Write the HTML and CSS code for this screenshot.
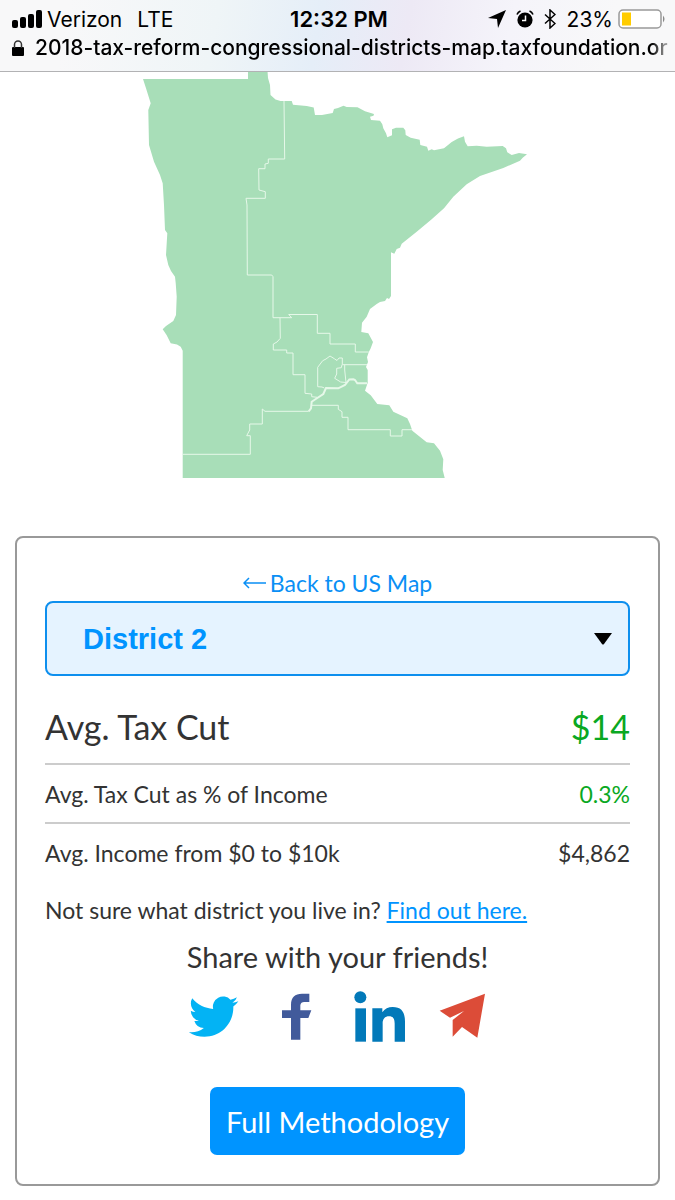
FILE: index.html
```html
<!DOCTYPE html>
<html lang="en">
<head>
  <meta charset="UTF-8">
  <meta name="viewport" content="width=device-width, initial-scale=1.0">
  <title>2018 Tax Reform by Congressional District</title>
  <link rel="stylesheet" href="styles.css">
</head>
<body>
  <header class="browser-bar">
    <div class="status-row">
      <div class="status-left">
        <svg class="signal-icon" viewBox="0 0 30 18" aria-hidden="true">
          <rect x="0" y="10" width="6" height="8" rx="2"/>
          <rect x="8" y="7" width="6" height="11" rx="2"/>
          <rect x="16" y="4" width="6" height="14" rx="2"/>
          <rect x="24" y="0" width="6" height="18" rx="2"/>
        </svg>
        <span>Verizon</span>
        <span class="network">LTE</span>
      </div>
      <div class="status-time">12:32 PM</div>
      <div class="status-right">
        <svg class="location-icon" viewBox="0 0 18 18" aria-hidden="true">
          <path d="M18 0L10 18L9 9L0 8Z"/>
        </svg>
        <svg class="alarm-icon" viewBox="0 0 18 18" aria-hidden="true">
          <circle cx="9" cy="10" r="7.6"/>
          <path d="M1 4.500Q2 2 4.500 1M17 4.500Q16 2 13.500 1" fill="none" stroke="#000" stroke-width="1.600"/>
          <path d="M9.500 5.500V10.500H6" fill="none" stroke="#fff" stroke-width="1.500"/>
        </svg>
        <svg class="bluetooth-icon" viewBox="0 0 12 20" aria-hidden="true">
          <path d="M1 5.500L11 14.500L6 19V1L11 5.500L1 14.500" fill="none" stroke="#000" stroke-width="1.500"/>
        </svg>
        <span>23%</span>
        <svg class="battery-icon" viewBox="0 0 48 20" aria-hidden="true">
          <rect x="1" y="1" width="42" height="18" rx="4" fill="#fff" stroke="#999" stroke-width="1.500"/>
          <rect x="4" y="3.500" width="9" height="13" fill="#fc0"/>
          <path d="M45 6.500Q48 10 45 13.500Z" fill="#888"/>
        </svg>
      </div>
    </div>
    <div class="url-row">
      <svg class="lock-icon" viewBox="0 0 12 16" aria-hidden="true">
        <rect x="0" y="7" width="12" height="9" rx="1"/>
        <path d="M2.500 8V4.500A3.500 3.500 0 0 1 9.500 4.500V8" fill="none" stroke="#333" stroke-width="1.500"/>
      </svg>
      <span class="url">2018-tax-reform-congressional-districts-map.taxfoundation.or</span>
    </div>
  </header>

  <main>
    <!-- Minnesota, split by district -->
    <svg class="state-map" viewBox="0 72 675 408" role="img" aria-label="Minnesota congressional districts">
      <path class="state" d="M143 79H248V71H267.500L268 78L270 85L270.500 95L275.500 99.500L280.500 101H291.700L293 104.700L306.700 106L313.700 107.500L315 115L322 115L332.700 113L334 109L338 108L343.500 105.700L346.700 107L357.500 107.300L365 111.300L374 114L373.500 115.700L370 116.700L371 120L380 120.700L382.300 124.300L383.300 128.300L386 133.300L387.300 137.300L392 135.300V129.300L396 127.700H403.300L405.300 130.300L405.700 135L410.700 137.700L419.700 139.700L420.300 145L427 146.700L428.300 150.700L431.700 149.300L434 150.300L444 148.300L451.700 142L458 138.500L464 136.300L465 141.700L467.700 146.300L476.700 145.700L486.700 146.700L502.700 146L506 148.300L507.300 152.300L511.700 155L519 153L527 154.300L522.700 157.700L520 160.700L503.300 168L480 176L466.700 184.300L453.300 196.700L444 208.300L431.700 219.300L416.700 231.700L401.700 243.700L400 247.700L396.700 249L394.300 253.700L391 252.300V296L389 299L387 298L385 301L380 302L376.700 304L370 309L366.700 316.700L362 322.700L361.300 332L368.300 333.300L373 342L370.700 348.300L368.700 352.300L367 357.300L368 362L366 367L367.700 370V382.700L365 390.700L370.700 395.300L377.300 404L389.300 405.300L393.300 411.700L407.300 418.300L410 424L412.300 430.700L426.700 442.300L434 443.300L440 450.700L443.300 459.300L442.700 470L444.700 478H182.700V350.700L180.700 346.700L177 344.500L170.700 343.300L166.700 335.300L162.700 329.300L166 326L173.300 321L176 315L176.700 296.700L175.700 283L175 276.700L171 271L168.300 265L166 255L167.300 233.300L165 230L164 205L162.700 183.300L160 175L154 161.700L149 145L148.300 110L150.700 103.300L146 88.300Z"/>
      <path class="district-line" d="M284 101L284.700 159H268.300V163.300L265 164V168.700H258.700L259 190L265.300 191.700V198.300H246L247 205L247.300 275H271.700L273 276.700V317.700H291.700L288.700 314.500H317.300V333.300H330V344H355.300V352H368.700"/>
      <path class="district-line" d="M280 317.700L280.300 338.300L277 342L273.300 344V350H286.700V353H293V374.700H305V393.300L311.700 394V396.700L317.300 397.300"/>
      <path class="district-line river" d="M367 383.300H357.300L355 380L353.300 379.300L349.300 379.500L345 385L338.300 388.300L326 388L323.300 394L317.300 398L311.700 401.700L311 408.300L308.700 411.300"/>
      <path class="district-line" d="M308.700 411.300H265L262.300 409V424H249.700V430L246.700 435.700H250.300V454.300H182.700"/>
      <path class="district-line" d="M311 405.300H338.300V409.300L342 411.700V417.300H348V429.700H390.300V436H402V429.700H412"/>
      <path class="district-line" d="M324.300 388L322 387L317.700 386.700V367.300L322.700 360.700L326 359L330 356L334.300 358.700L337 360.500L339 358H342.300V364.700H367"/>
      <path class="district-line" d="M342 364.700L341.300 367.700L336.700 368.300V374L334.700 378.300L340.700 382L346 382.500L344.700 370V364.700"/>
    </svg>

    <section class="panel">
      <a class="back-link" href="#">
        <svg class="back-arrow" viewBox="0 0 23 12" aria-hidden="true">
          <path d="M6 1L1 6L6 11M1 6H23" fill="none" stroke="#0a8ff5" stroke-width="1.500"/>
        </svg>
        Back to US Map
      </a>

      <div class="select-wrap">
        <select class="district-select" aria-label="Congressional district">
          <option>District 1</option>
          <option selected>District 2</option>
          <option>District 3</option>
          <option>District 4</option>
          <option>District 5</option>
          <option>District 6</option>
          <option>District 7</option>
          <option>District 8</option>
        </select>
        <svg class="select-arrow" viewBox="0 0 18 12" aria-hidden="true">
          <path d="M0 0H18L10 11Q9 12 8 11Z"/>
        </svg>
      </div>

      <table class="stats">
        <tbody>
          <tr class="main-stat">
            <th scope="row">Avg. Tax Cut</th>
            <td class="positive">$14</td>
          </tr>
          <tr>
            <th scope="row">Avg. Tax Cut as % of Income</th>
            <td class="positive">0.3%</td>
          </tr>
          <tr>
            <th scope="row">Avg. Income from $0 to $10k</th>
            <td>$4,862</td>
          </tr>
        </tbody>
      </table>

      <p class="lookup">Not sure what district you live in? <a href="#">Find out here.</a></p>

      <h2 class="share-title">Share with your friends!</h2>
      <div class="share-links">
        <a class="twitter" href="#" aria-label="Twitter">
          <svg viewBox="-0.900 -0.400 25.200 25.200" aria-hidden="true">
            <path d="M23.953 4.570a10 10 0 01-2.825.775 4.958 4.958 0 002.163-2.723c-.951.555-2.005.959-3.127 1.184a4.920 4.920 0 00-8.384 4.482C7.690 8.095 4.067 6.130 1.640 3.162a4.822 4.822 0 00-.666 2.475c0 1.710.870 3.213 2.188 4.096a4.904 4.904 0 01-2.228-.616v.060a4.923 4.923 0 003.946 4.827 4.996 4.996 0 01-2.212.085 4.936 4.936 0 004.604 3.417 9.867 9.867 0 01-6.102 2.105c-.390 0-.779-.023-1.170-.067a13.995 13.995 0 007.557 2.209c9.053 0 13.998-7.496 13.998-13.985 0-.210 0-.420-.015-.630A9.935 9.935 0 0024 4.590z"/>
          </svg>
        </a>
        <a class="facebook" href="#" aria-label="Facebook">
          <svg viewBox="0 0 156 156" aria-hidden="true">
            <path d="M63 146V81H36V58H63V42C63 18 75 8 96 8H118V33H106C94 33 91 37 91 46V58H124L115 81H91V146Z"/>
          </svg>
        </a>
        <a class="linkedin" href="#" aria-label="LinkedIn">
          <svg viewBox="0 0 156 156" aria-hidden="true">
            <circle cx="22" cy="19" r="18"/>
            <path d="M7 52H39V152H7Z"/>
            <path d="M58 152V52H88V64C95 53 106 48 119 48C146 48 156 64 156 92V152H125V98C125 84 121 76 108 76C94 76 89 86 89 98V152Z"/>
          </svg>
        </a>
        <a class="email" href="#" aria-label="Email">
          <svg viewBox="0 0 156 156" aria-hidden="true">
            <path d="M11 59L147 8L124 140L78 108L50 137V87L84 60L42 80Z"/>
          </svg>
        </a>
      </div>

      <button class="methodology-btn" type="button">Full Methodology</button>
    </section>
  </main>
</body>
</html>
```
FILE: styles.css
```css
* {
  box-sizing: border-box;
}

body {
  font-family: Lato, sans-serif;
  margin: 0;
  background-color: #fff;
  color: #333;
}

.browser-bar {
  height: 72px;
  padding: 6px 0 0 12px;
  font-family: Inter, sans-serif;
  color: #000;
  background: linear-gradient(100deg, #f8f8f9 10%, #eff5f7 32%, #e5eef8 47%, #ede9f5 60%, #f5f4fa 75%, #f8f8f9 90%);
  border-bottom: 1px solid #b2b2b4;
}

.status-row {
  display: grid;
  grid-template-columns: 1fr auto 1fr;
  align-items: center;
  height: 26px;
  padding-right: 9px;
  font-size: 21px;
}

.status-left,
.status-right {
  display: flex;
  align-items: center;
  gap: 5px;
}

.status-right {
  justify-content: flex-end;
}

.network {
  margin-left: 10px;
}

.status-time {
  font-size: 22px;
  font-weight: 600;
}

.signal-icon {
  width: 30px;
  height: 18px;
}

.location-icon,
.alarm-icon {
  width: 18px;
  height: 18px;
  margin-right: 5px;
}

.bluetooth-icon {
  width: 12px;
  height: 20px;
  margin-right: 6px;
}

.battery-icon {
  width: 48px;
  height: 20px;
}

.url-row {
  display: flex;
  align-items: center;
  gap: 11px;
  height: 32px;
}

.lock-icon {
  flex: none;
  width: 12px;
  height: 16px;
}

/* fades out where the address meets the screen edge */
.url {
  flex: 1;
  overflow: hidden;
  font-size: 21px;
  font-weight: 500;
  line-height: 32px;
  white-space: nowrap;
  -webkit-mask-image: linear-gradient(to left, transparent, #000 24px);
  mask-image: linear-gradient(to left, transparent, #000 24px);
}

.state-map {
  display: block;
  width: 100%;
}

.state {
  fill: #a8deb8;
}

.district-line {
  fill: none;
  stroke: #e6f8e9;
  stroke-width: 1;
}

.river {
  stroke-width: 2;
}

.panel {
  display: flex;
  flex-direction: column;
  margin: 56px 15px 14px;
  padding: 29px 28px;
  border: 2px solid #999;
  border-radius: 8px;
}

.back-link {
  display: flex;
  align-items: center;
  align-self: center;
  gap: 4px;
  margin-bottom: 2px;
  font-size: 23px;
  line-height: 32px;
  color: #0a8ff5;
  text-decoration: none;
}

.back-arrow {
  width: 23px;
  height: 12px;
}

.select-wrap {
  position: relative;
}

.district-select {
  display: block;
  width: 100%;
  height: 75px;
  padding: 0 36px;
  appearance: none;
  font-family: "Liberation Sans", sans-serif;
  font-size: 29px;
  font-weight: bold;
  color: #0094ff;
  background-color: #e5f3ff;
  border: 2px solid #0d8fee;
  border-radius: 8px;
}

.select-arrow {
  position: absolute;
  top: 32px;
  right: 18px;
  width: 18px;
  height: 12px;
  pointer-events: none;
}

.stats {
  width: 100%;
  margin-top: 14px;
  border-collapse: collapse;
  font-size: 23px;
}

.stats th,
.stats td {
  height: 59px;
  padding: 0;
  font-weight: 400;
  text-align: left;
  border-bottom: 2px solid #ccc;
}

.stats td {
  text-align: right;
}

.stats .main-stat th,
.stats .main-stat td {
  height: 74px;
  font-size: 34px;
}

.stats tr:last-child th,
.stats tr:last-child td {
  border-bottom: none;
}

.stats .positive {
  color: #0aa822;
}

.lookup {
  margin: 12px 0 0;
  font-size: 23px;
  line-height: 32px;
}

.lookup a {
  color: #0094ff;
}

.share-title {
  margin: 11px 0 14px;
  font-size: 29px;
  font-weight: 400;
  line-height: 40px;
  text-align: center;
}

.share-links {
  display: flex;
  justify-content: center;
  gap: 31px;
}

.share-links svg {
  display: block;
  width: 52px;
  height: 52px;
}

.twitter {
  fill: #03b3f4;
}

.facebook {
  fill: #415a9b;
}

.linkedin {
  fill: #0279b9;
}

.email {
  fill: #dc4c38;
}

.methodology-btn {
  align-self: center;
  height: 68px;
  margin-top: 44px;
  padding: 0 16px;
  font-family: Lato, sans-serif;
  font-size: 29px;
  color: #fff;
  background-color: #0094ff;
  border: none;
  border-radius: 7px;
  cursor: pointer;
}
```
